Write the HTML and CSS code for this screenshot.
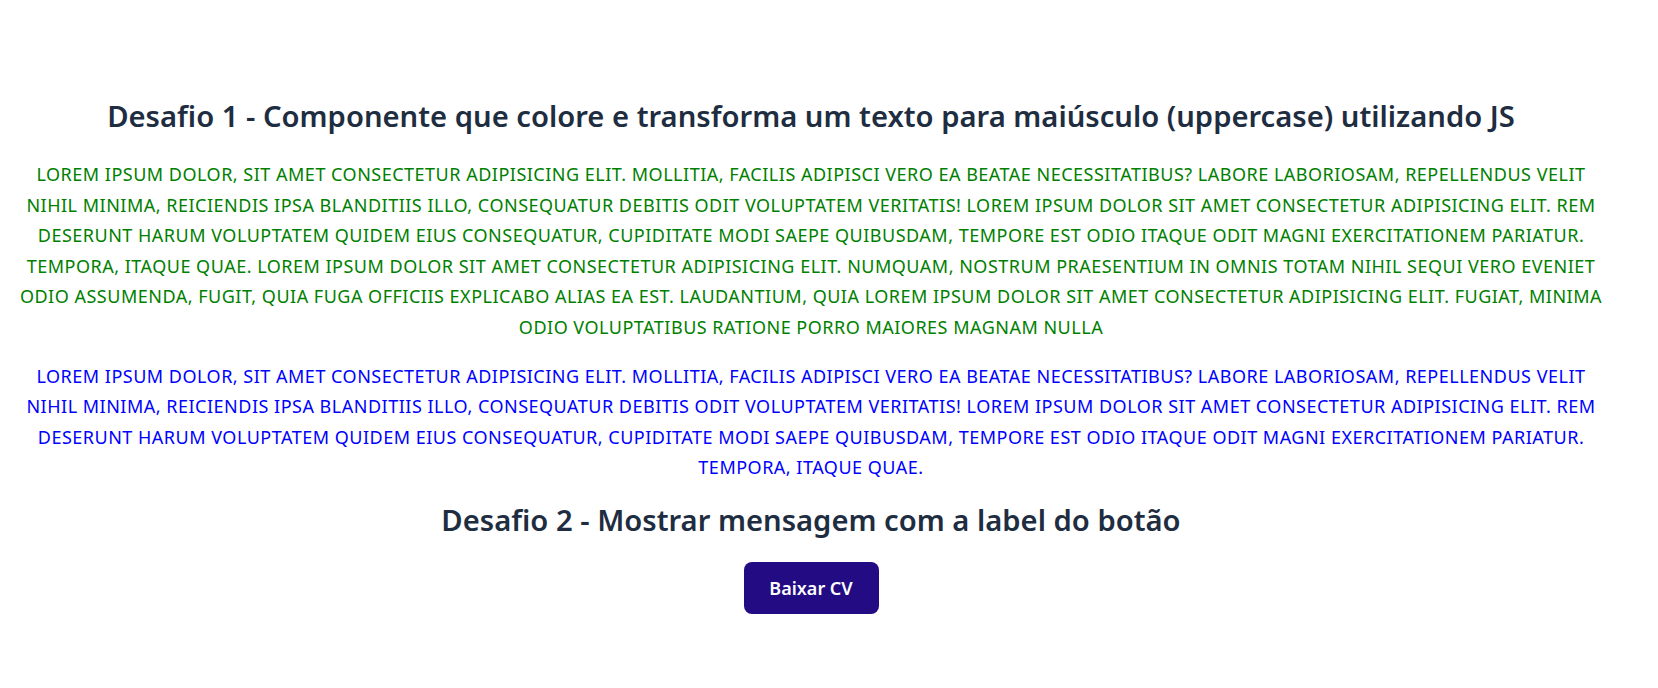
FILE: index.html
```html
<!DOCTYPE html>
<html lang="pt-BR">
<head>
<meta charset="utf-8">
<title>Desafios</title>
<link rel="stylesheet" href="styles.css">
</head>
<body>
<main class="page">
  <section class="challenge">
    <h1 class="title">Desafio 1 - Componente que colore e transforma um texto para maiúsculo (uppercase) utilizando JS</h1>
    <p class="text text-green">LOREM IPSUM DOLOR, SIT AMET CONSECTETUR ADIPISICING ELIT. MOLLITIA, FACILIS ADIPISCI VERO EA BEATAE NECESSITATIBUS? LABORE LABORIOSAM, REPELLENDUS VELIT<br>NIHIL MINIMA, REICIENDIS IPSA BLANDITIIS ILLO, CONSEQUATUR DEBITIS ODIT VOLUPTATEM VERITATIS! LOREM IPSUM DOLOR SIT AMET CONSECTETUR ADIPISICING ELIT. REM<br>DESERUNT HARUM VOLUPTATEM QUIDEM EIUS CONSEQUATUR, CUPIDITATE MODI SAEPE QUIBUSDAM, TEMPORE EST ODIO ITAQUE ODIT MAGNI EXERCITATIONEM PARIATUR.<br>TEMPORA, ITAQUE QUAE. LOREM IPSUM DOLOR SIT AMET CONSECTETUR ADIPISICING ELIT. NUMQUAM, NOSTRUM PRAESENTIUM IN OMNIS TOTAM NIHIL SEQUI VERO EVENIET<br>ODIO ASSUMENDA, FUGIT, QUIA FUGA OFFICIIS EXPLICABO ALIAS EA EST. LAUDANTIUM, QUIA LOREM IPSUM DOLOR SIT AMET CONSECTETUR ADIPISICING ELIT. FUGIAT, MINIMA<br>ODIO VOLUPTATIBUS RATIONE PORRO MAIORES MAGNAM NULLA</p>
    <p class="text text-blue">LOREM IPSUM DOLOR, SIT AMET CONSECTETUR ADIPISICING ELIT. MOLLITIA, FACILIS ADIPISCI VERO EA BEATAE NECESSITATIBUS? LABORE LABORIOSAM, REPELLENDUS VELIT<br>NIHIL MINIMA, REICIENDIS IPSA BLANDITIIS ILLO, CONSEQUATUR DEBITIS ODIT VOLUPTATEM VERITATIS! LOREM IPSUM DOLOR SIT AMET CONSECTETUR ADIPISICING ELIT. REM<br>DESERUNT HARUM VOLUPTATEM QUIDEM EIUS CONSEQUATUR, CUPIDITATE MODI SAEPE QUIBUSDAM, TEMPORE EST ODIO ITAQUE ODIT MAGNI EXERCITATIONEM PARIATUR.<br>TEMPORA, ITAQUE QUAE.</p>
  </section>
  <section class="challenge challenge-two">
    <h2 class="title">Desafio 2 - Mostrar mensagem com a label do botão</h2>
    <button class="btn" type="button">Baixar CV</button>
  </section>
</main>
</body>
</html>
```
FILE: styles.css
```css
html, body {
  margin: 0;
  padding: 0;
  background: #ffffff;
}

body {
  font-family: "Noto Sans", "Open Sans", sans-serif;
}

.page {
  display: flex;
  flex-direction: column;
  align-items: center;
  padding: 99px 36px 0 0;
  text-align: center;
}

.challenge {
  display: flex;
  flex-direction: column;
  align-items: center;
  width: 100%;
}

.title {
  margin: 0;
  font-size: 29.2px;
  font-weight: 600;
  line-height: 1.2;
  color: #1e2d3f;
}

.challenge > h1.title {
  margin-bottom: 25px;
}

.text {
  margin: 0 0 18px;
  font-size: 18px;
  line-height: 1.7;
  letter-spacing: 0.5px;
}

.text-green {
  color: #008000;
}

.text-blue {
  color: #0000ff;
  margin-bottom: 0;
}

.challenge-two {
  padding-top: 20px;
}

.btn {
  margin-top: 24px;
  padding: 14px 24px;
  height: 52px;
  min-width: 135px;
  border: none;
  border-radius: 8px;
  background: #230b84;
  color: #ffffff;
  font-family: "Noto Sans", "Open Sans", sans-serif;
  font-size: 18px;
  font-weight: 600;
  line-height: 24px;
  cursor: pointer;
}
```
